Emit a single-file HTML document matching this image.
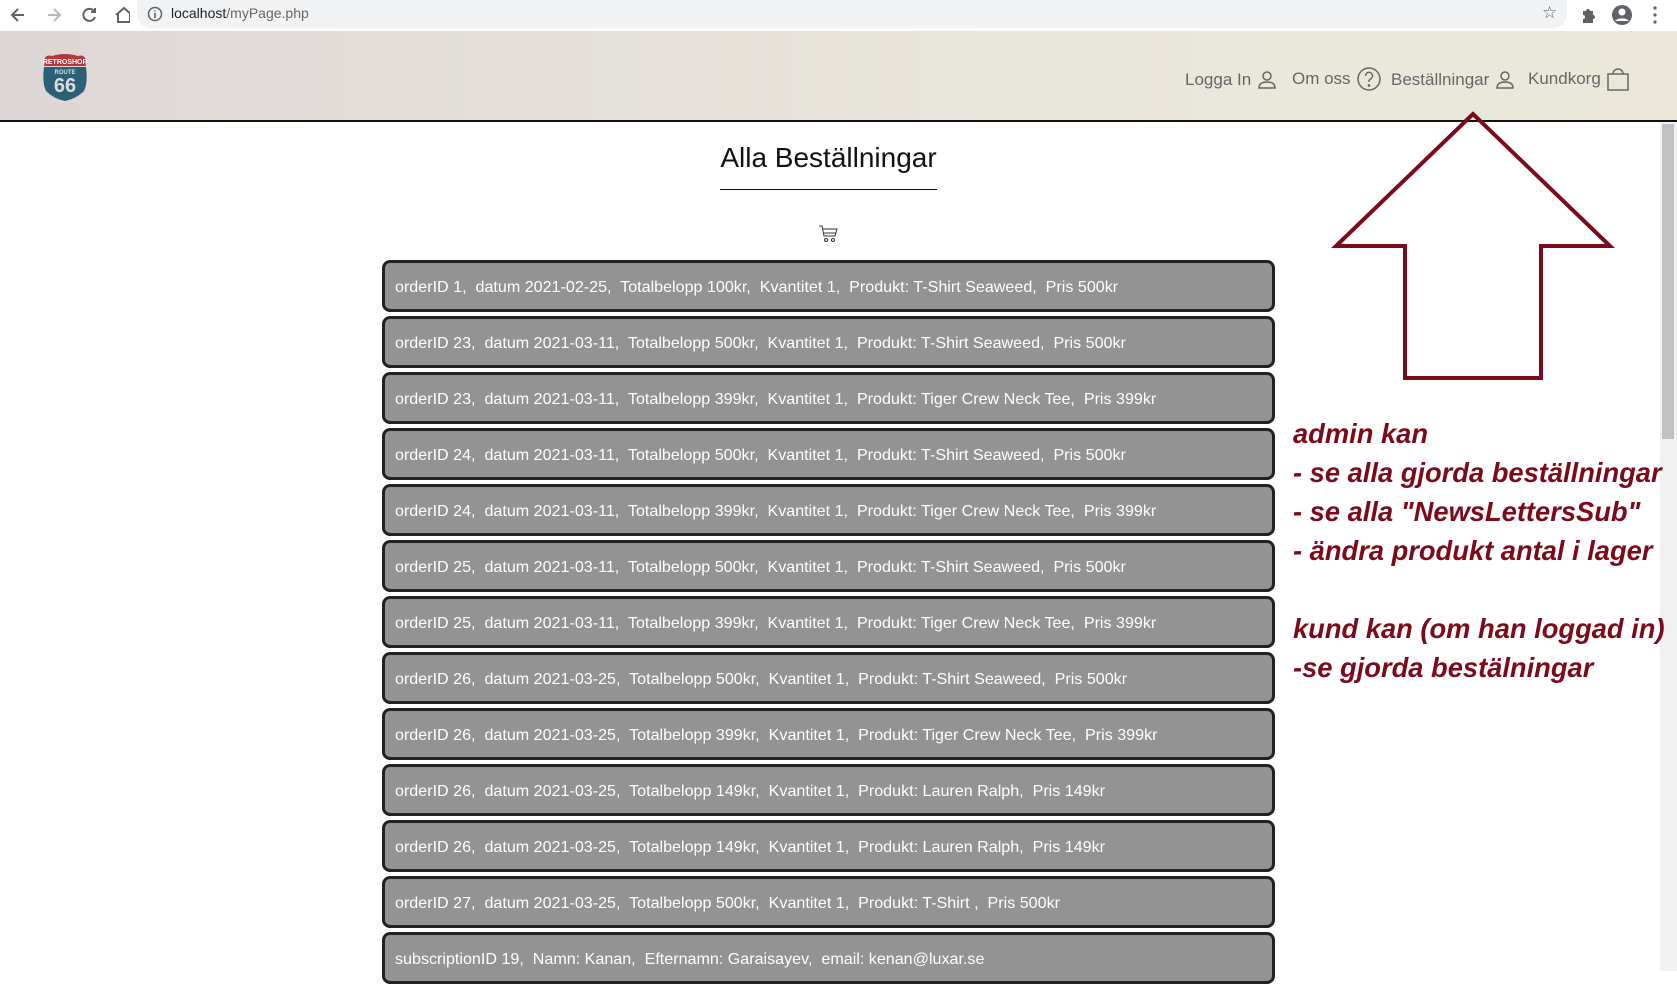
<!DOCTYPE html>
<html><head><meta charset="utf-8"><style>
*{margin:0;padding:0;box-sizing:border-box}
body{width:1677px;height:971px;overflow:hidden;background:#fff;font-family:"Liberation Sans",Arial,sans-serif;position:relative}
.chrome{position:absolute;left:0;top:0;width:1677px;height:31px;background:#fff}
.pill{position:absolute;left:137px;top:0;width:1430px;height:28px;background:#f1f3f4;border-radius:0 0 14px 14px}
.url{position:absolute;left:171px;top:5px;font-size:14px;color:#202124}
.url span{color:#666}
.hdr{position:absolute;left:0;top:31px;width:1677px;height:91px;background:linear-gradient(90deg,#ddd6d6,#e9e6dc 60%,#ebe8da);border-bottom:2px solid #111}
.nav{position:absolute;top:70px;font-size:17px;color:#666;display:flex;align-items:center}
.nav svg{margin-left:6px}
h1{position:absolute;left:0;width:1657px;top:142px;text-align:center;font-weight:normal;font-size:28px;color:#111}
.ul{position:absolute;left:720px;top:189px;width:217px;height:1px;background:#111}
.row{position:absolute;left:382px;width:893px;height:52px;background:#939393;border:3px solid #222;border-radius:8px;color:#fff;font-size:16.1px;padding-left:10px;line-height:48px;white-space:pre}
.note{position:absolute;left:1293px;color:#7b0a1a;font-weight:bold;font-style:italic;font-size:27.3px;line-height:39px;white-space:pre}
.sb{position:absolute;left:1660px;top:122px;width:17px;height:849px;background:#f1f1f1}
.th{position:absolute;left:1662px;top:124px;width:12px;height:315px;background:#c1c1c1}
</style></head><body>
<div class="chrome">
<svg style="position:absolute;left:10px;top:6px" width="120" height="18" viewBox="0 0 120 18" fill="none" stroke-width="2">
<path d="M14 9H3M8 3L2 9l6 6" stroke="#5f6368"/>
<path d="M38 9h11M44 3l6 6-6 6" stroke="#bbb"/>
<path d="M84 5a6 6 0 1 0 1 6M85 2v4h-4" stroke="#5f6368"/>
<path d="M106 9l8-7 8 7M108 8v8h12V8" stroke="#5f6368"/>
</svg>
<div class="pill"></div>
<svg style="position:absolute;left:147px;top:6px" width="16" height="16"><circle cx="8" cy="8" r="6.5" fill="none" stroke="#5f6368" stroke-width="1.5"/><path d="M8 7v5M8 4.5v1" stroke="#5f6368" stroke-width="1.6"/></svg>
<div class="url">localhost<span>/myPage.php</span></div>
<div style="position:absolute;left:1542px;top:3px;font-size:17px;color:#5f6368">☆</div>
<svg style="position:absolute;left:1580px;top:5px" width="70" height="20"><path d="M3 6h3a2 2 0 0 1 4 0h3v4a2 2 0 0 1 0 4v4H3v-4a2 2 0 0 0 0-4z" fill="#5f6368"/><circle cx="42" cy="10" r="10" fill="#5f6368"/><circle cx="42" cy="7" r="3.5" fill="#fff"/><path d="M35 16a8 5 0 0 1 14 0" fill="#fff"/></svg>
<svg style="position:absolute;left:1652px;top:5px" width="6" height="20"><circle cx="3" cy="3" r="1.6" fill="#5f6368"/><circle cx="3" cy="10" r="1.6" fill="#5f6368"/><circle cx="3" cy="17" r="1.6" fill="#5f6368"/></svg>
</div>
<div class="hdr"></div>
<svg style="position:absolute;left:40px;top:52px" width="50" height="50" viewBox="0 0 50 50">
<path d="M4 8q2-6 8-4 13-4 26 0 6-2 8 4-1 3 0 6H4q1-3 0-6z" fill="#b8363c"/>
<text x="25" y="12" font-size="7" fill="#fff" text-anchor="middle" font-family="Liberation Sans" font-weight="bold">RETROSHOP</text>
<path d="M4 15h42q2 16-2 24-8 8-19 10Q14 47 6 39 2 31 4 15z" fill="#2a6178"/>
<text x="25" y="22" font-size="6" fill="#ddd" text-anchor="middle" font-family="Liberation Sans" font-weight="bold">ROUTE</text>
<text x="25" y="40" font-size="20" fill="#ddd" text-anchor="middle" font-family="Liberation Sans" font-weight="bold">66</text>
</svg>
<div class="nav" style="left:1185px">Logga In<svg width="20" height="20" viewBox="0 0 20 20" fill="none" stroke="#666" stroke-width="1.5"><circle cx="10" cy="6" r="4"/><path d="M2 18q0-6 8-6t8 6z"/></svg></div>
<div class="nav" style="left:1292px;top:67px">Om oss<svg width="24" height="24" viewBox="0 0 24 24" fill="none" stroke="#666" stroke-width="1.5"><circle cx="12" cy="12" r="11"/><path d="M8.5 9a3.5 3.5 0 1 1 5 3c-1.5.8-1.5 1.5-1.5 3"/><circle cx="12" cy="18.5" r=".6" fill="#666"/></svg></div>
<div class="nav" style="left:1391px">Beställningar<svg width="20" height="20" viewBox="0 0 20 20" fill="none" stroke="#666" stroke-width="1.5"><circle cx="10" cy="6" r="4"/><path d="M2 18q0-6 8-6t8 6z"/></svg></div>
<div class="nav" style="left:1528px;top:67px">Kundkorg<svg width="22" height="24" viewBox="0 0 22 24" fill="none" stroke="#666" stroke-width="1.5"><rect x="1" y="7" width="20" height="16"/><path d="M6 7a5 5 0 0 1 10 0"/></svg></div>
<h1>Alla Beställningar</h1>
<div class="ul"></div>
<svg style="position:absolute;left:818px;top:224px" width="20" height="19" viewBox="0 0 20 19" fill="none" stroke="#333" stroke-width="1"><path d="M1 2h3l2 10h11l2-7H5"/><path d="M6 9h12"/><circle cx="8" cy="16" r="1.5"/><circle cx="15" cy="16" r="1.5"/></svg>
<div class="row" style="top:260px">orderID 1,  datum 2021-02-25,  Totalbelopp 100kr,  Kvantitet 1,  Produkt: T-Shirt Seaweed,  Pris 500kr</div>
<div class="row" style="top:316px">orderID 23,  datum 2021-03-11,  Totalbelopp 500kr,  Kvantitet 1,  Produkt: T-Shirt Seaweed,  Pris 500kr</div>
<div class="row" style="top:372px">orderID 23,  datum 2021-03-11,  Totalbelopp 399kr,  Kvantitet 1,  Produkt: Tiger Crew Neck Tee,  Pris 399kr</div>
<div class="row" style="top:428px">orderID 24,  datum 2021-03-11,  Totalbelopp 500kr,  Kvantitet 1,  Produkt: T-Shirt Seaweed,  Pris 500kr</div>
<div class="row" style="top:484px">orderID 24,  datum 2021-03-11,  Totalbelopp 399kr,  Kvantitet 1,  Produkt: Tiger Crew Neck Tee,  Pris 399kr</div>
<div class="row" style="top:540px">orderID 25,  datum 2021-03-11,  Totalbelopp 500kr,  Kvantitet 1,  Produkt: T-Shirt Seaweed,  Pris 500kr</div>
<div class="row" style="top:596px">orderID 25,  datum 2021-03-11,  Totalbelopp 399kr,  Kvantitet 1,  Produkt: Tiger Crew Neck Tee,  Pris 399kr</div>
<div class="row" style="top:652px">orderID 26,  datum 2021-03-25,  Totalbelopp 500kr,  Kvantitet 1,  Produkt: T-Shirt Seaweed,  Pris 500kr</div>
<div class="row" style="top:708px">orderID 26,  datum 2021-03-25,  Totalbelopp 399kr,  Kvantitet 1,  Produkt: Tiger Crew Neck Tee,  Pris 399kr</div>
<div class="row" style="top:764px">orderID 26,  datum 2021-03-25,  Totalbelopp 149kr,  Kvantitet 1,  Produkt: Lauren Ralph,  Pris 149kr</div>
<div class="row" style="top:820px">orderID 26,  datum 2021-03-25,  Totalbelopp 149kr,  Kvantitet 1,  Produkt: Lauren Ralph,  Pris 149kr</div>
<div class="row" style="top:876px">orderID 27,  datum 2021-03-25,  Totalbelopp 500kr,  Kvantitet 1,  Produkt: T-Shirt ,  Pris 500kr</div>
<div class="row" style="top:932px">subscriptionID 19,  Namn: Kanan,  Efternamn: Garaisayev,  email: kenan@luxar.se</div>
<div class="sb"></div><div class="th"></div>
<svg style="position:absolute;left:0;top:0" width="1677" height="971"><path d="M1473 114L1336 246H1405V378H1541V246H1610Z" fill="none" stroke="#7b0a1a" stroke-width="4" stroke-linejoin="miter"/></svg>
<div class="note" style="top:414px">admin kan
- se alla gjorda beställningar
- se alla "NewsLettersSub"
- ändra produkt antal i lager

kund kan (om han loggad in)
-se gjorda bestälningar</div>
</body></html>
